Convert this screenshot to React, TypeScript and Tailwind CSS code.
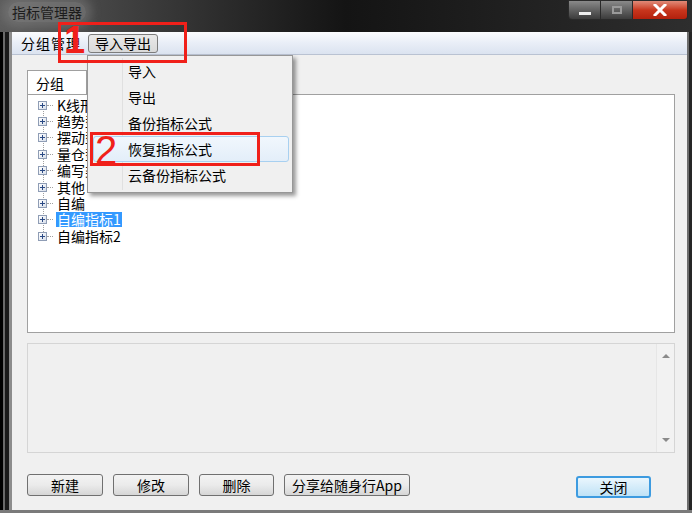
import React from 'react';

const font = "font-['Noto_Sans_CJK_SC','Noto_Sans',sans-serif]";

const treeItems = ['K线形态', '趋势型', '摆动型', '量仓型', '编写类型', '其他', '自编', '自编指标1', '自编指标2'];
const menuItems = ['导入', '导出', '备份指标公式', '恢复指标公式', '云备份指标公式'];

const PlusBox: React.FC = () => (
  <span className="relative w-[9px] h-[9px] border border-[#8f9db5] bg-gradient-to-br from-white to-[#d8dfea] shrink-0">
    <span className="absolute left-[1px] right-[1px] top-[3px] h-px bg-[#2b4a84]" />
    <span className="absolute top-[1px] bottom-[1px] left-[3px] w-px bg-[#2b4a84]" />
  </span>
);

const Btn: React.FC<{ label: string; w: string; primary?: boolean }> = ({ label, w, primary }) => (
  <div
    className={`${w} h-[22px] rounded-[3px] flex items-center justify-center text-[14px] leading-none text-black ${
      primary
        ? 'border-2 border-[#3d9be0] bg-gradient-to-b from-[#eaf6fd] to-[#bfe2f6]'
        : 'border border-[#707070] bg-gradient-to-b from-[#f3f3f3] via-[#ebebeb] to-[#d6d6d6]'
    }`}
  >
    {label}
  </div>
);

export default function App() {
  return (
    <div className={`relative w-[692px] h-[513px] overflow-hidden bg-[#141414] flex flex-col ${font}`}>
      {/* title bar */}
      <div className="h-[32px] shrink-0 flex items-start bg-gradient-to-r from-[#5c5c5c] via-[#141414] to-[#2e2e2e]">
        <div className="ml-[8px] mt-[2px] px-[4px] text-[14px] leading-[20px] text-[#1c1c1c] bg-[#9a9a9a]/40 rounded-full shadow-[0_0_10px_6px_rgba(150,150,150,0.35)]">
          指标管理器
        </div>
        <div className="ml-auto mr-[4px] flex h-[20px]">
          <div className="w-[33px] h-full border border-[#2a2a2a] rounded-bl-[4px] bg-gradient-to-b from-[#8a8a8a] to-[#3c3c3c] flex items-center justify-center">
            <span className="w-[12px] h-[3px] bg-white/90 mt-[6px]" />
          </div>
          <div className="w-[32px] h-full border-y border-r border-[#2a2a2a] bg-gradient-to-b from-[#8a8a8a] to-[#3c3c3c] flex items-center justify-center">
            <span className="w-[10px] h-[8px] border-2 border-[#9a9a9a]" />
          </div>
          <div className="w-[55px] h-full border-y border-r border-[#2a2a2a] rounded-br-[4px] bg-gradient-to-b from-[#e08a78] via-[#c8361d] to-[#b3200c] flex items-center justify-center">
            <svg width="14" height="12" viewBox="0 0 14 12">
              <path d="M2 1 L12 11 M12 1 L2 11" stroke="white" strokeWidth="3" strokeLinecap="square" />
            </svg>
          </div>
        </div>
      </div>

      {/* frame + client */}
      <div className="flex-1 flex min-h-0">
        <div className="w-[12px] shrink-0 flex">
          <div className="w-[3px] bg-black" />
          <div className="w-[2px] bg-[#6a6a6a]" />
          <div className="w-[4px] bg-[#1a1a1a]" />
          <div className="w-[3px] bg-[#8c8c8c]" />
        </div>

        <div className="flex-1 bg-[#f0f0f0] flex flex-col">
          {/* menu bar */}
          <div className="h-[23px] shrink-0 flex items-center bg-gradient-to-b from-[#fbfcfe] via-[#e9eef7] to-[#dbe3f0] border-b border-[#b9c2d2] text-[14px] text-black">
            <span className="ml-[9px] leading-none tracking-[1px]">分组管理</span>
            <span className="ml-[7px] h-[19px] w-[70px] flex items-center justify-center border border-[#7c7c7c] rounded-[3px] bg-gradient-to-b from-[#e9e9e9] to-[#d9d9d9] leading-none">
              导入导出
            </span>
          </div>

          <div className="pl-[15px] pr-[12px] flex flex-col">
            {/* tab + tree */}
            <div className="mt-[15px] w-[60px] h-[24px] border-t border-x border-[#a0a0a0] bg-white flex items-center pl-[8px] text-[14px] leading-none text-black">
              分组
            </div>
            <div className="h-[239px] border border-[#a0a0a0] bg-white pt-[2px]">
              <div className="relative pl-[10px]">
                <div className="absolute left-[15px] top-[8px] h-[131px] border-l border-dotted border-[#a0a0a0]" />
                {treeItems.map((t, i) => (
                  <div key={t} className="h-[16.4px] flex items-center relative">
                    <PlusBox />
                    <span className="w-[6px] border-t border-dotted border-[#a0a0a0]" />
                    <span
                      className={`ml-[3px] text-[14px] leading-[15px] px-[1px] ${
                        i === 7 ? 'bg-[#3399ff] text-white' : 'text-black'
                      }`}
                    >
                      {t}
                    </span>
                  </div>
                ))}
              </div>
            </div>

            {/* description box */}
            <div className="mt-[10px] h-[110px] border border-[#d5d5d5] bg-[#f0f0f0] flex justify-end">
              <div className="w-[18px] h-full border-l border-[#e6e6e6] bg-[#f2f2f2] flex flex-col items-center justify-between py-[10px]">
                <span className="w-0 h-0 border-x-[4px] border-x-transparent border-b-[4px] border-b-[#8a8a8a]" />
                <span className="w-0 h-0 border-x-[4px] border-x-transparent border-t-[4px] border-t-[#8a8a8a]" />
              </div>
            </div>

            {/* buttons */}
            <div className="mt-[21px] flex items-start">
              <div className="flex gap-[10px]">
                <Btn label="新建" w="w-[76px]" />
                <Btn label="修改" w="w-[76px]" />
                <Btn label="删除" w="w-[75px]" />
                <Btn label="分享给随身行App" w="w-[126px]" />
              </div>
              <div className="ml-auto mr-[24px] mt-[2px]">
                <Btn label="关闭" w="w-[75px]" primary />
              </div>
            </div>
          </div>
        </div>

        <div className="w-[5px] shrink-0 flex">
          <div className="w-[2px] bg-[#6c6c6c]" />
          <div className="w-[3px] bg-[#262626]" />
        </div>
      </div>
      <div className="h-[3px] shrink-0 bg-[#7a7a7a]" />

      {/* dropdown menu */}
      <div className="absolute left-[87px] top-[55px] w-[206px] h-[138px] bg-[#f0f0f0] border border-[#979797] shadow-[3px_3px_4px_rgba(0,0,0,0.4)] pt-[2px] px-[3px]">
        <div className="absolute left-[34px] top-[2px] bottom-[2px] border-l border-[#e0e0e0]" />
        {menuItems.map((m, i) => (
          <div
            key={m}
            className={`relative h-[26px] flex items-center text-[14px] leading-none text-black ${
              i === 3
                ? 'pl-[34px] ml-[2px] rounded-[3px] border border-[#a8d0f0] bg-gradient-to-b from-[#f1f7fd] to-[#e3eef9]'
                : 'pl-[37px]'
            }`}
          >
            {m}
          </div>
        ))}
      </div>

      {/* annotations */}
      <div className="absolute left-[58px] top-[22px] w-[129px] h-[41px] border-[3px] border-[#f0201a]" />
      <div className="absolute left-[64px] top-[21px] text-[38px] leading-[38px] font-bold text-[#f0201a] font-['Liberation_Sans',sans-serif]">
        1
      </div>
      <div className="absolute left-[90px] top-[132px] w-[170px] h-[34px] border-[3px] border-[#f0201a]" />
      <div className="absolute left-[95px] top-[130px] text-[40px] leading-[40px] text-[#f0201a] font-['Liberation_Sans',sans-serif]">
        2
      </div>
    </div>
  );
}
